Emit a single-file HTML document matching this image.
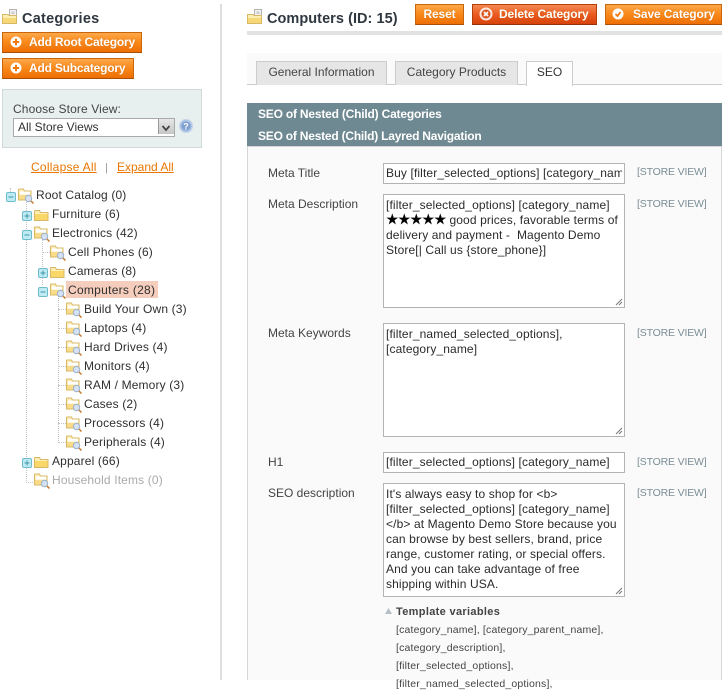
<!DOCTYPE html>
<html><head><meta charset="utf-8">
<style>
html,body{margin:0;padding:0;width:725px;height:680px;overflow:hidden;background:#fff;font-family:"Liberation Sans",Arial,sans-serif;font-size:12px;color:#2f2f2f}
.a,.t,.btn,.lbl,.sv,.box,.tv{position:absolute}
.t,.lbl,.sv,.tv{white-space:pre;line-height:16px}
.btn{height:19px;line-height:18px;border:1px solid #c9660c;border-bottom-color:#a94e05;background:linear-gradient(#fda84b 0,#f98a1c 45%,#ee6f04 100%);color:#fff;font-weight:bold;box-sizing:content-box;white-space:pre;text-shadow:0 0 1px #c96a10;letter-spacing:-.12px}
.btn.del{background:linear-gradient(#f58a52 0,#ea5a20 50%,#d6420a 100%);border-color:#b53f0a;border-bottom-color:#93300a}
.lbl{left:268px;color:#444}
.sv{left:637px;font-size:10.5px;color:#7a8d96;letter-spacing:-.17px}
.box{left:383px;width:240px;border:1px solid #b3b3b3;background:#fff;overflow:hidden}
.box div{position:absolute;left:2px;width:236px;overflow:hidden;white-space:pre;line-height:15px;color:#2a2a2a;letter-spacing:.12px}
.tn{position:absolute;white-space:pre;line-height:16px;color:#2f2f2f;letter-spacing:.15px}
.tv{left:396px;font-size:10.5px;color:#444;letter-spacing:.17px}
svg{position:absolute;overflow:visible}
.dv{position:absolute;border-left:1px dotted #c4c4c4;width:0}
.dh{position:absolute;border-top:1px dotted #c4c4c4;height:0}
</style></head><body>
<svg width="0" height="0" style="position:absolute"><defs>
<symbol id="fo" viewBox="0 0 16 16"><path d="M.5 3V12.500H14V4.500H6.500L5.500 2.500H1Z" fill="#fdeeb4" stroke="#d8b866"/><path d="M1 6H13.500V12H1Z" fill="#f9d768"/></symbol>
<symbol id="fs" viewBox="0 0 16 16"><path d="M.5 1.500V12H13V3H6.500L5.500 1H1Z" fill="#fdeeb9" stroke="#d8b866"/><path d="M2 3.500H12V6.500H2Z" fill="#fff"/><path d="M1 7H12.500V11.500H1Z" fill="#f8dc8a"/><circle cx="10.500" cy="10.500" r="3.200" fill="#d4e2f3" stroke="#9db1ca"/><path d="M13 13L15.500 15.500" stroke="#c47a2a" stroke-width="1.500"/></symbol>
<symbol id="pl" viewBox="0 0 10 10"><rect x=".5" y=".5" width="9" height="9" rx="1.500" fill="#bfeaf2" stroke="#6cbccd"/><path d="M2.500 5H7.500M5 2.500V7.500" stroke="#3d97ad"/></symbol>
<symbol id="mi" viewBox="0 0 10 10"><rect x=".5" y=".5" width="9" height="9" rx="1.500" fill="#bfeaf2" stroke="#6cbccd"/><path d="M2.500 5H7.500" stroke="#3d97ad"/></symbol>
<symbol id="hd" viewBox="0 0 18 18"><path d="M7.500 .5H14.500V9H7.500Z" fill="#f1f1f1" stroke="#b3b3b3"/><path d="M9.500 2.500H12.500V5H9.500Z" fill="#ccc"/><path d="M.5 5.500V14.500H14.500V6.500H7L6 5.500Z" fill="#fdeeb4" stroke="#d8b866"/><path d="M1 9H14V14H1Z" fill="#f6d878"/></symbol>
<symbol id="rs" viewBox="0 0 8 8"><path d="M1 7L7 1M4 7L7 4" stroke="#777" stroke-width="1"/></symbol>
</defs></svg>

<!-- LEFT -->
<div class="a" style="left:220px;top:4px;width:2px;height:676px;background:#dedede"></div>
<svg style="left:2px;top:9px" width="18" height="18"><use href="#hd"/></svg>
<div class="t" style="left:22px;top:10px;font-size:14.5px;font-weight:bold;line-height:18px;color:#2f3740;letter-spacing:.25px">Categories</div>

<div class="btn" style="left:2px;top:32px;width:138px"><svg style="left:7px;top:3px" width="12" height="12"><circle cx="6" cy="6" r="5.500" fill="#fff"/><path d="M2.800 6H9.200M6 2.800V9.200" stroke="#ee7b12" stroke-width="2"/></svg><span style="position:absolute;left:26px;top:0;letter-spacing:-.2px">Add Root Category</span></div>
<div class="btn" style="left:2px;top:58px;width:130px"><svg style="left:7px;top:3px" width="12" height="12"><circle cx="6" cy="6" r="5.500" fill="#fff"/><path d="M2.800 6H9.200M6 2.800V9.200" stroke="#ee7b12" stroke-width="2"/></svg><span style="position:absolute;left:26px;top:0;letter-spacing:-.2px">Add Subcategory</span></div>

<div class="a" style="left:2px;top:89px;width:198px;height:57px;background:#e7efef;border:1px solid #d0dada"></div>
<div class="t" style="left:13px;top:101px;color:#444;letter-spacing:.12px">Choose Store View:</div>
<div class="a" style="left:13px;top:118px;width:160px;height:17px;border:1px solid #aaa;background:#fff"></div>
<div class="t" style="left:18px;top:119px;color:#333">All Store Views</div>
<div class="a" style="left:158px;top:119px;width:15px;height:15px;background:linear-gradient(#e6e6e6,#c6c6c6);border-left:1px solid #999"></div>
<svg style="left:161px;top:125px" width="10" height="7"><path d="M1.500 1L5 5L8.500 1" fill="none" stroke="#444" stroke-width="1.800"/></svg>
<svg style="left:179px;top:119px" width="15" height="15"><circle cx="7" cy="7" r="6.500" fill="#a9c3e6" stroke="#c5d4e6"/><circle cx="7" cy="7" r="4.500" fill="#7f9fd0"/><text x="7" y="10.500" font-size="9" font-weight="bold" font-family="Liberation Sans" fill="#fff" text-anchor="middle">?</text></svg>

<div class="t" style="left:31px;top:159px;color:#ea7601;text-decoration:underline;letter-spacing:.25px">Collapse All</div>
<div class="t" style="left:105px;top:160px;color:#999;font-size:11px">|</div>
<div class="t" style="left:117px;top:159px;color:#ea7601;text-decoration:underline">Expand All</div>

<!-- tree lines -->
<div class="dv" style="left:10px;top:188px;height:4px"></div>
<div class="dv" style="left:26px;top:200px;height:281px"></div>
<div class="dv" style="left:42px;top:239px;height:46px"></div>
<div class="dv" style="left:58px;top:296px;height:147px"></div>
<div class="dh" style="left:42px;top:252px;width:8px"></div>
<div class="dh" style="left:26px;top:482px;width:7px"></div>
<div class="dh" style="left:58px;top:309px;width:8px"></div>
<div class="dh" style="left:58px;top:328px;width:8px"></div>
<div class="dh" style="left:58px;top:347px;width:8px"></div>
<div class="dh" style="left:58px;top:366px;width:8px"></div>
<div class="dh" style="left:58px;top:385px;width:8px"></div>
<div class="dh" style="left:58px;top:404px;width:8px"></div>
<div class="dh" style="left:58px;top:423px;width:8px"></div>
<div class="dh" style="left:58px;top:442px;width:8px"></div>

<div class="a" style="left:66px;top:281px;width:92px;height:17px;background:#f4cdbd"></div>

<svg style="left:6px;top:192px" width="10" height="10"><use href="#mi"/></svg>
<svg style="left:18px;top:188px" width="16" height="16"><use href="#fs"/></svg>
<div class="tn" style="left:36px;top:187px">Root Catalog (0)</div>

<svg style="left:22px;top:211px" width="10" height="10"><use href="#pl"/></svg>
<svg style="left:34px;top:208px" width="16" height="16"><use href="#fo"/></svg>
<div class="tn" style="left:52px;top:206px">Furniture (6)</div>

<svg style="left:22px;top:230px" width="10" height="10"><use href="#mi"/></svg>
<svg style="left:34px;top:226px" width="16" height="16"><use href="#fs"/></svg>
<div class="tn" style="left:52px;top:225px">Electronics (42)</div>

<svg style="left:50px;top:245px" width="16" height="16"><use href="#fs"/></svg>
<div class="tn" style="left:68px;top:244px">Cell Phones (6)</div>

<svg style="left:38px;top:268px" width="10" height="10"><use href="#pl"/></svg>
<svg style="left:50px;top:265px" width="16" height="16"><use href="#fo"/></svg>
<div class="tn" style="left:68px;top:263px">Cameras (8)</div>

<svg style="left:38px;top:287px" width="10" height="10"><use href="#mi"/></svg>
<svg style="left:50px;top:283px" width="16" height="16"><use href="#fs"/></svg>
<div class="tn" style="left:68px;top:282px;letter-spacing:.28px">Computers (28)</div>

<svg style="left:66px;top:302px" width="16" height="16"><use href="#fs"/></svg>
<div class="tn" style="left:84px;top:301px">Build Your Own (3)</div>
<svg style="left:66px;top:321px" width="16" height="16"><use href="#fs"/></svg>
<div class="tn" style="left:84px;top:320px">Laptops (4)</div>
<svg style="left:66px;top:340px" width="16" height="16"><use href="#fs"/></svg>
<div class="tn" style="left:84px;top:339px">Hard Drives (4)</div>
<svg style="left:66px;top:359px" width="16" height="16"><use href="#fs"/></svg>
<div class="tn" style="left:84px;top:358px">Monitors (4)</div>
<svg style="left:66px;top:378px" width="16" height="16"><use href="#fs"/></svg>
<div class="tn" style="left:84px;top:377px">RAM / Memory (3)</div>
<svg style="left:66px;top:397px" width="16" height="16"><use href="#fs"/></svg>
<div class="tn" style="left:84px;top:396px">Cases (2)</div>
<svg style="left:66px;top:416px" width="16" height="16"><use href="#fs"/></svg>
<div class="tn" style="left:84px;top:415px">Processors (4)</div>
<svg style="left:66px;top:435px" width="16" height="16"><use href="#fs"/></svg>
<div class="tn" style="left:84px;top:434px">Peripherals (4)</div>

<svg style="left:22px;top:458px" width="10" height="10"><use href="#pl"/></svg>
<svg style="left:34px;top:455px" width="16" height="16"><use href="#fo"/></svg>
<div class="tn" style="left:52px;top:453px">Apparel (66)</div>
<svg style="left:34px;top:473px" width="16" height="16"><use href="#fs"/></svg>
<div class="tn" style="left:52px;top:472px;color:#aaa">Household Items (0)</div>

<!-- RIGHT header -->
<svg style="left:247px;top:9px" width="18" height="18"><use href="#hd"/></svg>
<div class="t" style="left:267px;top:10px;font-size:14.5px;font-weight:bold;line-height:18px;color:#2f3740;letter-spacing:.05px">Computers (ID: 15)</div>
<div class="a" style="left:247px;top:31px;width:475px;height:4px;background:#e2e2e2"></div>

<div class="btn" style="left:415px;top:4px;width:47px;text-align:center">Reset</div>
<div class="btn del" style="left:472px;top:4px;width:123px"><svg style="left:6px;top:2px" width="14" height="14"><circle cx="7" cy="7" r="6.500" fill="#fff" opacity=".85"/><circle cx="7" cy="7" r="4.500" fill="#d9541e"/><path d="M5 5L9 9M9 5L5 9" stroke="#fff" stroke-width="1.800"/></svg><span style="position:absolute;left:26px;top:0">Delete Category</span></div>
<div class="btn" style="left:605px;top:4px;width:115px"><svg style="left:6px;top:3px" width="12" height="12"><circle cx="6" cy="6" r="5.500" fill="#fff"/><path d="M3.500 6L5.500 8L8.500 4" fill="none" stroke="#ee7b12" stroke-width="1.800"/></svg><span style="position:absolute;left:27px;top:0">Save Category</span></div>

<!-- tabs -->
<div class="a" style="left:247px;top:53px;width:475px;height:31px;background:#fafafa;border-bottom:1px solid #ccc"></div>
<div class="a" style="left:256px;top:61px;width:129px;height:23px;background:#e6e6e6;border:1px solid #ccc;border-bottom:none;line-height:21px;text-align:center;color:#444">General Information</div>
<div class="a" style="left:395px;top:61px;width:121px;height:23px;background:#e6e6e6;border:1px solid #ccc;border-bottom:none;line-height:21px;text-align:center;color:#444">Category Products</div>
<div class="a" style="left:526px;top:61px;width:45px;height:24px;background:#fff;border:1px solid #ccc;border-bottom:none;line-height:21px;text-align:center;color:#333">SEO</div>

<!-- section -->
<div class="a" style="left:247px;top:147px;width:473px;height:533px;background:#fafafa;border-left:1px solid #d6d6d6;border-right:1px solid #d6d6d6"></div>
<div class="a" style="left:247px;top:103px;width:475px;height:44px;background:#6f8992;border-bottom:1px solid #d6d6d6;box-sizing:border-box"></div>
<div class="t" style="left:258px;top:106px;color:#fff;font-weight:bold;letter-spacing:-.2px">SEO of Nested (Child) Categories</div>
<div class="t" style="left:258px;top:128px;color:#fff;font-weight:bold;letter-spacing:-.22px">SEO of Nested (Child) Layred Navigation</div>

<!-- form -->
<div class="lbl" style="top:165px">Meta Title</div>
<div class="box" style="top:163px;height:19px"><div style="top:2px">Buy [filter_selected_options] [category_name]</div></div>
<div class="sv" style="top:164px">[STORE VIEW]</div>

<div class="lbl" style="top:196px">Meta Description</div>
<div class="box" style="top:194px;height:112px"><div style="top:3px">[filter_selected_options] [category_name]
<span style="font-family:'DejaVu Sans';font-size:14px;color:#000;letter-spacing:-.55px;line-height:15px;-webkit-text-stroke:.3px #000">★★★★★</span> good prices, favorable terms of
delivery and payment -  Magento Demo
Store[| Call us {store_phone}]</div><svg style="right:1px;bottom:1px" width="8" height="8"><use href="#rs"/></svg></div>
<div class="sv" style="top:196px">[STORE VIEW]</div>

<div class="lbl" style="top:325px">Meta Keywords</div>
<div class="box" style="top:323px;height:112px"><div style="top:3px">[filter_named_selected_options],
[category_name]</div><svg style="right:1px;bottom:1px" width="8" height="8"><use href="#rs"/></svg></div>
<div class="sv" style="top:325px">[STORE VIEW]</div>

<div class="lbl" style="top:454px">H1</div>
<div class="box" style="top:452px;height:19px"><div style="top:2px">[filter_selected_options] [category_name]</div></div>
<div class="sv" style="top:454px">[STORE VIEW]</div>

<div class="lbl" style="top:485px">SEO description</div>
<div class="box" style="top:483px;height:112px"><div style="top:3px">It's always easy to shop for &lt;b&gt;
[filter_selected_options] [category_name]
&lt;/b&gt; at Magento Demo Store because you
can browse by best sellers, brand, price
range, customer rating, or special offers.
And you can take advantage of free
shipping within USA.</div><svg style="right:1px;bottom:1px" width="8" height="8"><use href="#rs"/></svg></div>
<div class="sv" style="top:485px">[STORE VIEW]</div>

<svg style="left:385px;top:608px" width="7" height="6"><path d="M0 6L3.500 0L7 6Z" fill="#b4c0c6"/></svg>
<div class="tv" style="top:604px;font-weight:bold;font-size:11px;letter-spacing:.33px">Template variables</div>
<div class="tv" style="top:622px">[category_name], [category_parent_name],</div>
<div class="tv" style="top:640px">[category_description],</div>
<div class="tv" style="top:658px">[filter_selected_options],</div>
<div class="tv" style="top:676px">[filter_named_selected_options],</div>
</body></html>
